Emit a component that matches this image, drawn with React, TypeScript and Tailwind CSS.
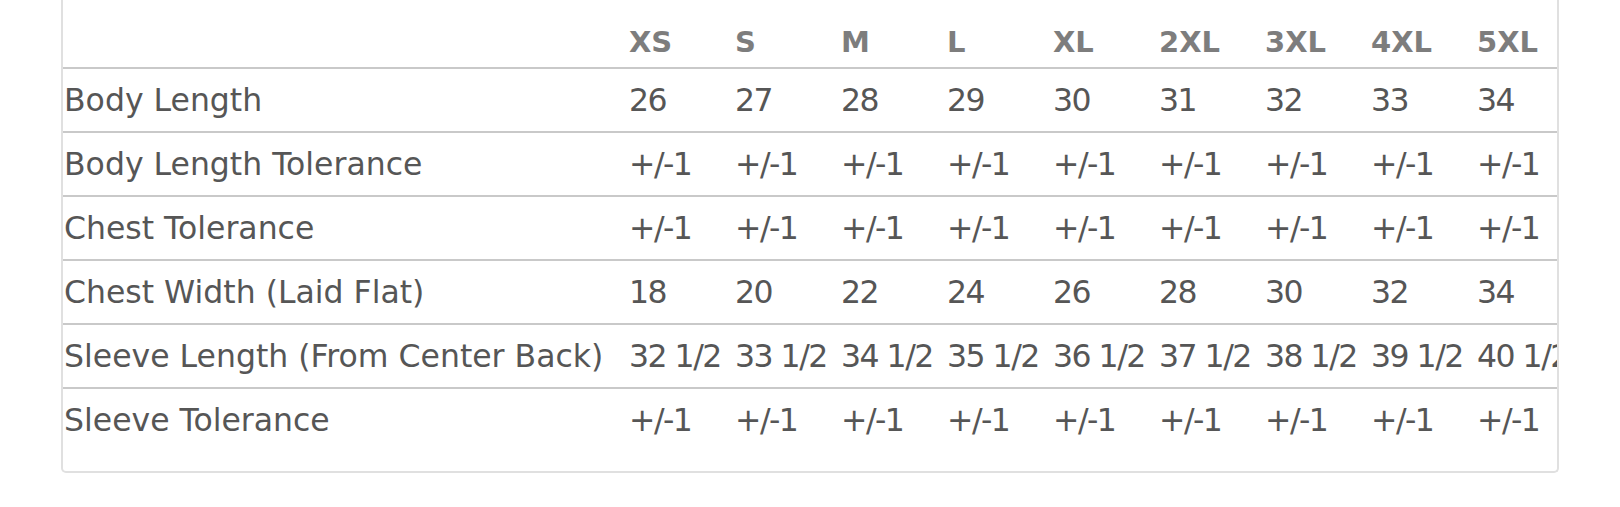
import React from "react";

const sizes = ["XS", "S", "M", "L", "XL", "2XL", "3XL", "4XL", "5XL"];

const tol = Array(9).fill("+/-1");

const rows: { label: string; values: string[] }[] = [
  { label: "Body Length", values: ["26", "27", "28", "29", "30", "31", "32", "33", "34"] },
  { label: "Body Length Tolerance", values: tol },
  { label: "Chest Tolerance", values: tol },
  { label: "Chest Width (Laid Flat)", values: ["18", "20", "22", "24", "26", "28", "30", "32", "34"] },
  {
    label: "Sleeve Length (From Center Back)",
    values: ["32 1/2", "33 1/2", "34 1/2", "35 1/2", "36 1/2", "37 1/2", "38 1/2", "39 1/2", "40 1/2"],
  },
  { label: "Sleeve Tolerance", values: tol },
];

function SizeChart() {
  return (
    <div className="w-[1498px] overflow-hidden rounded-b-[5px] border-x-2 border-b-2 border-[#e0e0e0] pb-[20px]">
      <div className="w-max">
        {/* header */}
        <div className="grid h-[69px] grid-cols-[566px_repeat(9,106px)] items-center border-b-2 border-[#c9c9c9] pt-[18px]">
          <div />
          {sizes.map((s) => (
            <div key={s} className="text-[29px] font-bold leading-none text-[#7d7d7d]">
              {s}
            </div>
          ))}
        </div>

        {rows.map((r, i) => (
          <div
            key={r.label}
            className={
              i === rows.length - 1
                ? "grid h-[62px] grid-cols-[566px_repeat(9,106px)] items-center pt-[2px]"
                : "grid h-[64px] grid-cols-[566px_repeat(9,106px)] items-center border-b-2 border-[#c9c9c9] pt-[2px]"
            }
          >
            <div className="whitespace-nowrap pl-px text-[31.5px] leading-none text-[#565656]">{r.label}</div>
            {r.values.map((v, j) => (
              <div key={j} className="whitespace-nowrap text-[31.5px] leading-none tracking-[-1.5px] text-[#565656]">
                {v}
              </div>
            ))}
          </div>
        ))}
      </div>
    </div>
  );
}

export default function App() {
  return (
    <div className="h-[507px] w-[1620px] overflow-hidden bg-white pl-[61px] font-['DejaVu_Sans',sans-serif]">
      <SizeChart />
    </div>
  );
}
